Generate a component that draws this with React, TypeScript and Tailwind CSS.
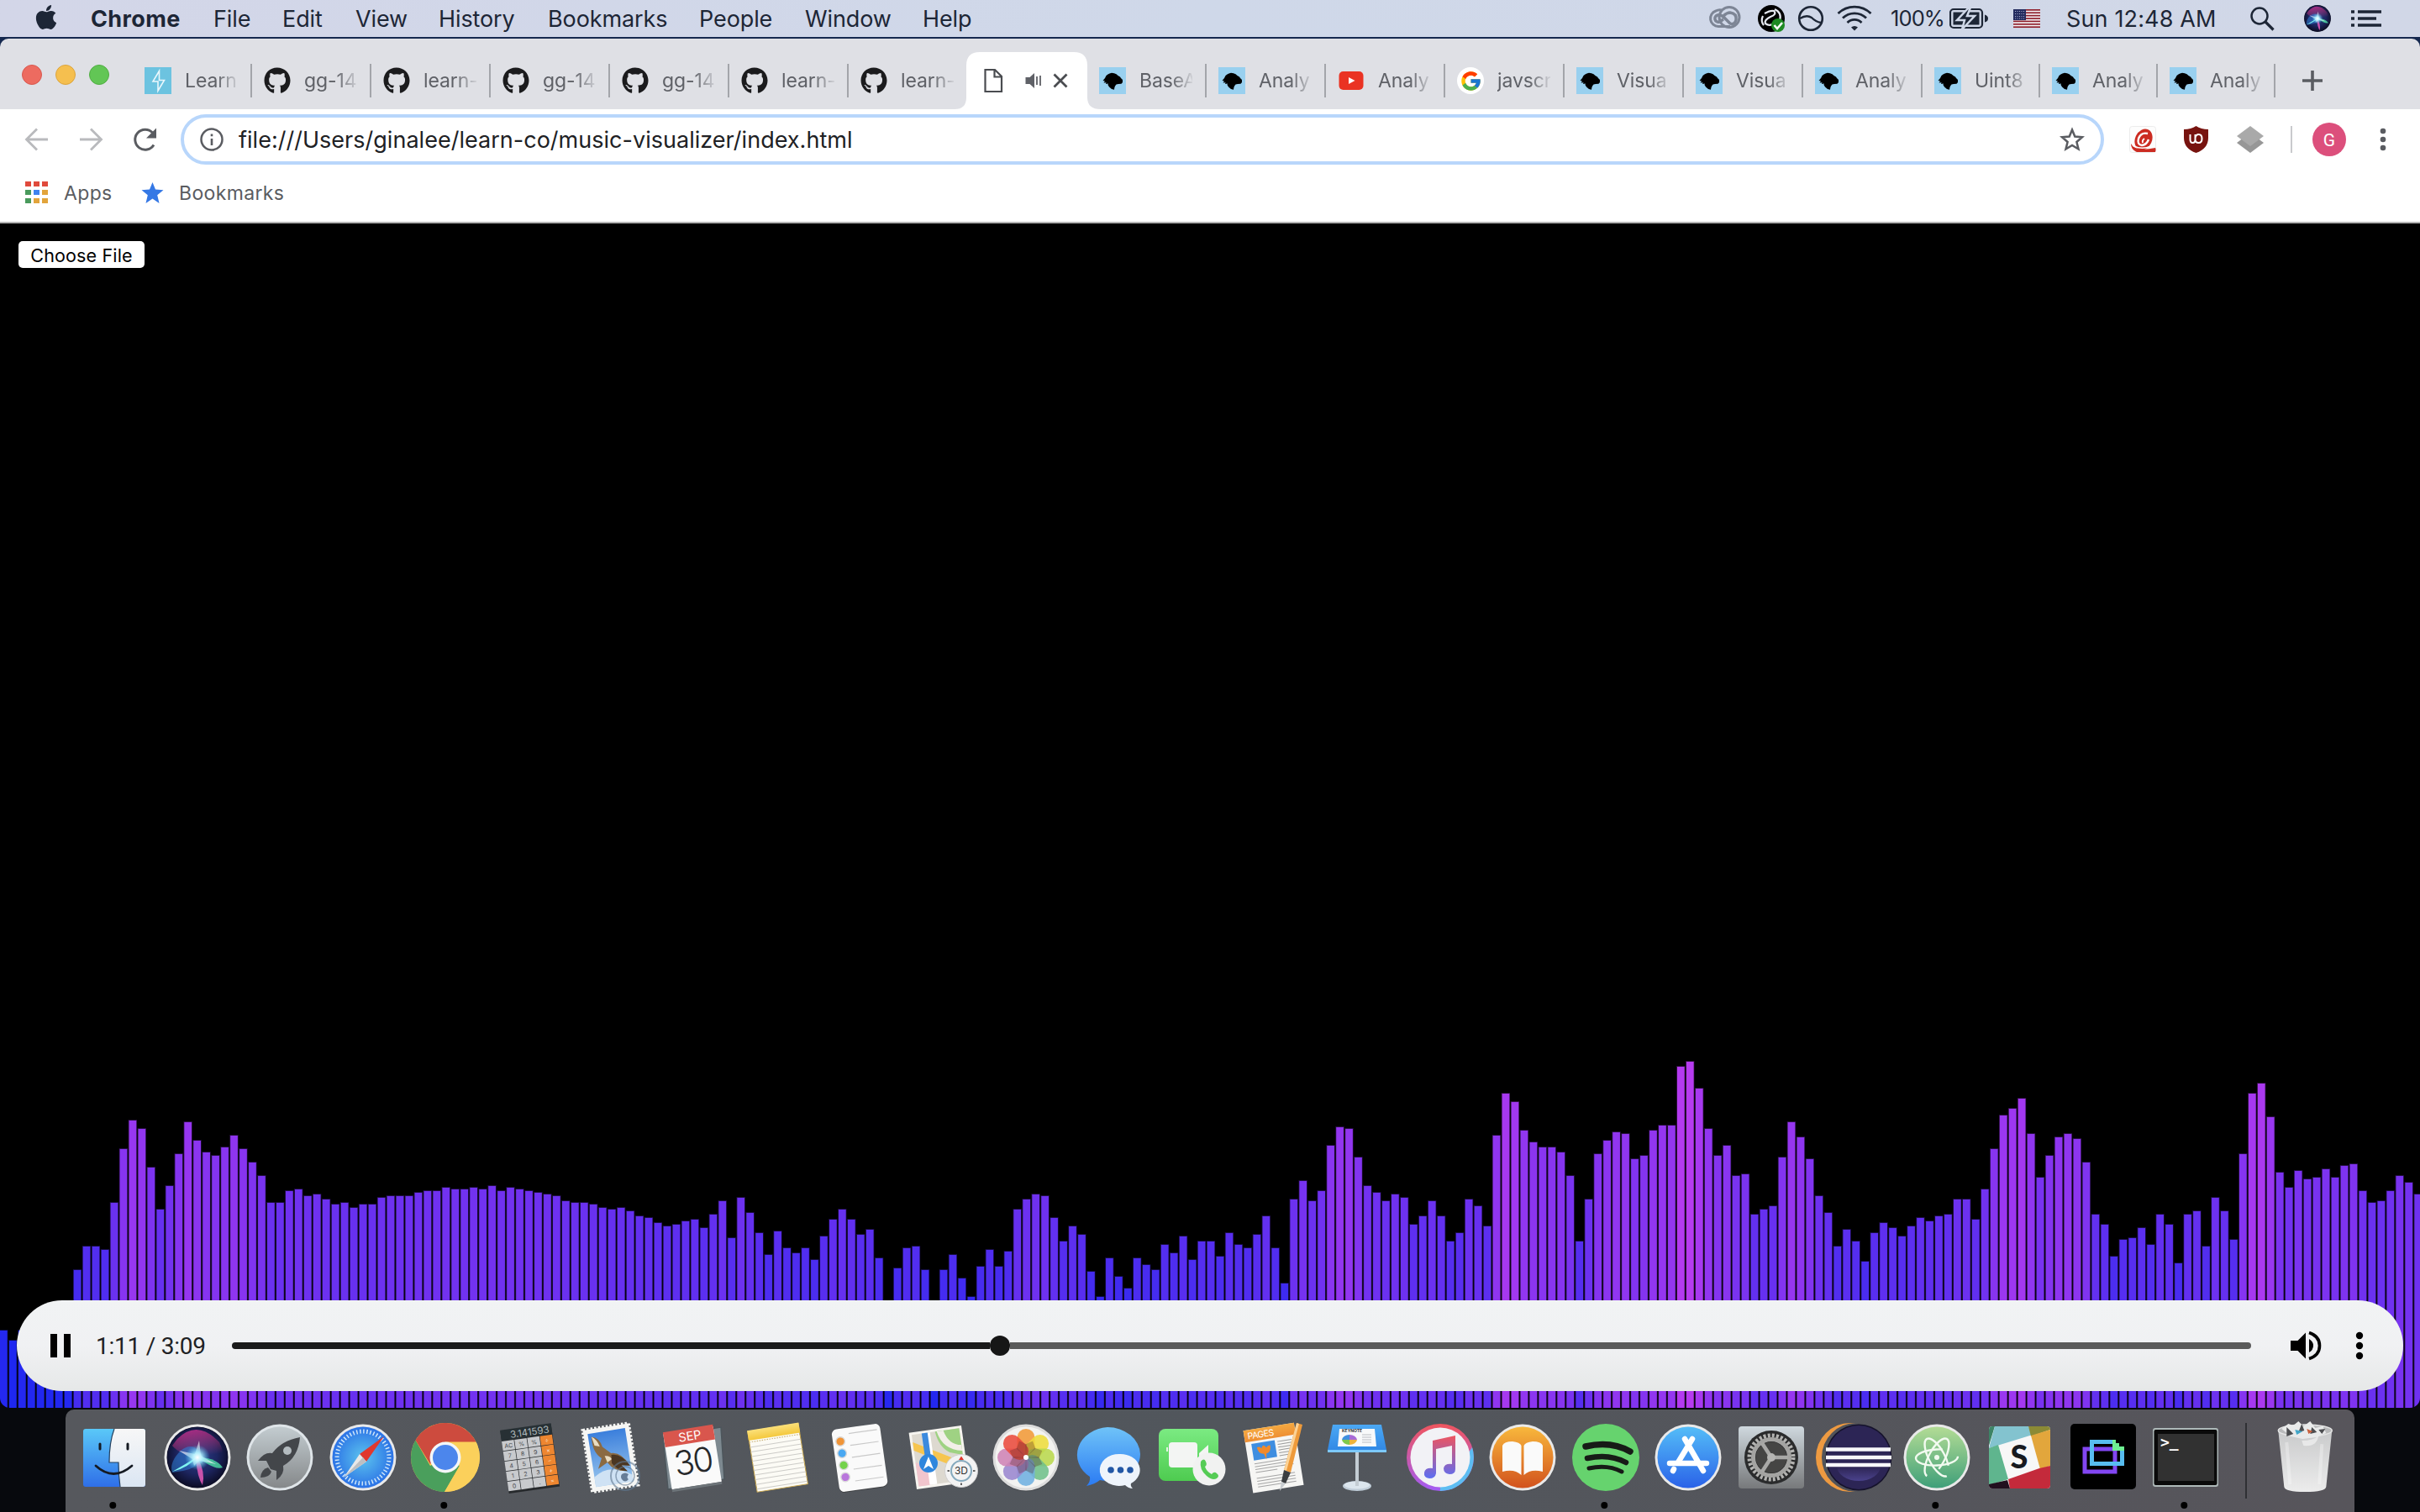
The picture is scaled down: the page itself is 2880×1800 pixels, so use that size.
import type { ReactNode } from "react";
import { FaApple, FaGithub } from "react-icons/fa";
import { FcGoogle } from "react-icons/fc";

/* ---------- Menu bar ---------- */

const menus = [
  { label: "File", cls: "w-[82px]" },
  { label: "Edit", cls: "w-[87px]" },
  { label: "View", cls: "w-[99px]" },
  { label: "History", cls: "w-[130px]" },
  { label: "Bookmarks", cls: "w-[180px]" },
  { label: "People", cls: "w-[126px]" },
  { label: "Window", cls: "w-[140px]" },
  { label: "Help", cls: "w-[80px]" },
];

function SiriOrb() {
  return (
    <>
      <defs>
        <radialGradient id="orb" cx="0.5" cy="0.45" r="0.55">
          <stop offset="0" stopColor="#2b3f8c" />
          <stop offset="0.6" stopColor="#1d2560" />
          <stop offset="1" stopColor="#0c0d26" />
        </radialGradient>
        <linearGradient id="orbPink" x1="0" y1="0" x2="0.3" y2="1">
          <stop offset="0" stopColor="#b02c8d" />
          <stop offset="1" stopColor="#e0407a" stopOpacity="0" />
        </linearGradient>
        <radialGradient id="orbGlow">
          <stop offset="0" stopColor="#ffffff" />
          <stop offset="0.35" stopColor="#b8f5ff" stopOpacity="0.9" />
          <stop offset="1" stopColor="#48c4ee" stopOpacity="0" />
        </radialGradient>
      </defs>
      <circle r="36" fill="url(#orb)" />
      <path d="M-24-22Q0-46 26-18Q34-2 26 2Q12-8 0 0Q-22-4-30-14Z" fill="url(#orbPink)" />
      <path d="M-20-8Q-2-22 8 4Q-6 16-30 18Q-34 6-20-8Z" fill="#2f7fd8" opacity=".55" />
      <path d="M0 0Q22 0 30 12Q22 16 0 0Z" fill="#4fe0a8" opacity=".8" />
      <path d="M0 0Q10 18 6 33Q0 24-2 2Z" fill="#e85ab8" opacity=".85" />
      <path d="M-30 17Q-14 8 0-1Q-10 12-30 17Z" fill="#7ef4f0" />
      <path d="M2-20L4-2L22 8L2 4L-4 10L-6 2L-22-8L-3-4Z" fill="#fff" opacity=".6" />
      <circle r="15" fill="url(#orbGlow)" />
    </>
  );
}

function MenuBar() {
  return (
    <div className="flex h-[44px] items-center bg-linear-to-r from-[#d3d6e8] via-[#cfd8e9] to-[#d1d7e7] text-[27px] leading-[44px] text-[#1d2636]">
      <div className="flex w-[108px] shrink-0 pl-[40px]">
        <FaApple className="-mt-1 h-[33px] w-[30px]" />
      </div>
      <div className="w-[146px] pt-px font-bold tracking-[0.4px]">Chrome</div>
      {menus.map((m) => (
        <div key={m.label} className={`${m.cls} shrink-0 pt-px tracking-[-0.1px]`}>
          {m.label}
        </div>
      ))}
      <div className="ml-auto flex items-center">
        <svg className="h-[44px] w-[218px]" viewBox="2020 0 218 44" fill="none">
          <g stroke="#7d8595" strokeWidth="3">
            <circle cx="2058" cy="20.500" r="12" />
            <path d="M2049 12a9 9 0 0 0-7 1a9.500 9.500 0 0 0 3 18.500h14" />
            <path d="M2051 23l-5 3a4 4 0 0 1-2-8q4-1 8 3l7 7q5 2 7-4q1-8-7-9q-4 0-8 4" strokeWidth="3.500" />
          </g>
          <circle cx="2108" cy="22" r="16" fill="#000" />
          <path d="M2112 11q9 4 6 14M2100 16q7-4 11-3q4 4-4 7q-8 4-6 8q4 3 8 1M2098 19q-3 6 1 11" stroke="#e6e9f1" strokeWidth="2.200" />
          <circle cx="2116" cy="30" r="8" fill="#1e8a23" />
          <path d="M2111.500 30l3.500 4l6-7" stroke="#fff" strokeWidth="2.600" />
          <circle cx="2155" cy="22" r="13.800" stroke="#1d2636" strokeWidth="2.600" />
          <path d="M2142 22q8-5 14-1q5 5 11 6" stroke="#1d2636" strokeWidth="2.400" />
          <g stroke="#1d2636" strokeWidth="2.800">
            <path d="M2187.500 16a28 28 0 0 1 39 0" />
            <path d="M2193 21.500a20 20 0 0 1 28 0" />
            <path d="M2198.500 27a12 12 0 0 1 17 0" />
          </g>
          <path d="M2203 32.500a6 6 0 0 1 8 0l-4 4z" fill="#1d2636" />
        </svg>
        <div className="w-[82px] pl-[12px] text-[25.500px] tracking-[-0.9px]">100%</div>
        <svg className="h-[44px] w-[139px]" viewBox="2320 0 139 44" fill="none">
          <rect x="2321" y="11" width="38" height="22" rx="4" stroke="#1d2636" strokeWidth="2.200" />
          <rect x="2324.500" y="14.500" width="31" height="15" fill="#1d2636" />
          <path d="M2362 17.500q4 1 4 4.500t-4 4.500z" fill="#1d2636" />
          <path d="M2343 9l-14 15h9l-3 11l15-16h-9l4-10z" fill="#1d2636" stroke="#d0d8e8" strokeWidth="2.500" />
          <rect x="2396" y="11" width="32" height="22" fill="#f3f3f6" />
          {[0, 1, 2, 3, 4, 5, 6].map((i) => (
            <rect key={i} x="2396" y={11 + i * 3.39} width="32" height="1.700" fill="#8f1f2b" />
          ))}
          <rect x="2396" y="11" width="15" height="13" fill="#232b5e" />
          <path d="M2398 13.500h12M2398 16.500h12M2398 19.500h12M2398 22h12" stroke="#aab0cf" strokeWidth="1" strokeDasharray="1 1.500" />
        </svg>
        <div className="w-[219px] pt-px tracking-[0.15px]">Sun 12:48 AM</div>
        <svg className="h-[44px] w-[202px]" viewBox="2678 0 202 44" fill="none">
          <circle cx="2689" cy="19" r="9.500" stroke="#1d2636" strokeWidth="2.500" />
          <path d="M2696 26l9.500 9.500" stroke="#1d2636" strokeWidth="3.200" />
          <g transform="translate(2758 22) scale(.43)">
            <circle r="37" fill="#0d1024" />
            <SiriOrb />
          </g>
          <path d="M2806 14h28M2806 22h22M2806 30h28M2798 14h4M2798 22h4M2798 30h4" stroke="#1d2636" strokeWidth="3.400" />
        </svg>
      </div>
    </div>
  );
}

/* ---------- Tab strip ---------- */

function LearnIcon() {
  return (
    <svg className="h-8 w-8 shrink-0" viewBox="0 0 32 32" fill="none">
      <rect width="32" height="32" fill="#6cc3e0" />
      <path d="M17.500 4.500L10 17h6v11l7.500-12.500h-6z" stroke="#e9f7fc" strokeWidth="1.600" />
    </svg>
  );
}

function MdnIcon() {
  return (
    <svg className="h-8 w-8 shrink-0" viewBox="0 0 32 32">
      <rect width="32" height="32" fill="#99d0ef" />
      <path d="M4.500 16L7 13L8.500 10L10.500 8.500L12.500 7.500L15 6.800L18 7.200L20.500 8.200L22.500 10L25 11.500L26 13L28 15L28 18L26.500 19.800L23 20L20.500 20.500L19 22.500L18.300 24.500L18 26.800L15 26L12 23.500L10.500 21L10.800 19.500L8 20L8.500 18.200L5.500 18.600L7 16.500Z" />
    </svg>
  );
}

function YoutubeIcon() {
  return (
    <svg className="h-8 w-8 shrink-0" viewBox="0 0 32 32">
      <rect x="1.500" y="5" width="29" height="22" rx="5" fill="#ea3323" />
      <path d="M13 12l7.500 4l-7.500 4z" fill="#fff" />
    </svg>
  );
}

function Tab({ icon, title, divider = true, narrow = false }: { icon: ReactNode; title: string; divider?: boolean; narrow?: boolean }) {
  return (
    <div className={`flex h-[68px] shrink-0 items-center pl-[14px] ${narrow ? "w-[140px]" : "w-[142px]"}`}>
      {icon}
      <div className="ml-4 w-[63px] overflow-hidden text-[23px] leading-[30px] tracking-[-0.1px] whitespace-nowrap text-[#5f6167] [mask-image:linear-gradient(to_right,black_60%,transparent_105%)]">{title}</div>
      {divider && <div className={`h-10 w-[2px] bg-[#a3a5aa] ${narrow ? "ml-[13px]" : "ml-[15px]"}`} />}
    </div>
  );
}

const gh = <FaGithub className="h-8 w-8 shrink-0 text-[#1b1b1d]" />;
const mdn = <MdnIcon />;

function TabStrip() {
  return (
    <div className="flex h-[84px] items-end rounded-t-[10px] bg-[#dfe0e5]">
      <div className="flex h-[84px] w-[158px] shrink-0 items-start gap-4 pt-[31px] pl-[26px]">
        <div className="h-6 w-6 rounded-full border border-[#d8574e] bg-[#ed6b60]" />
        <div className="h-6 w-6 rounded-full border border-[#dca43c] bg-[#f5bf4f]" />
        <div className="h-6 w-6 rounded-full border border-[#50ad42] bg-[#62c655]" />
      </div>
      <Tab icon={<LearnIcon />} title="Learn" />
      <Tab icon={gh} title="gg-14" />
      <Tab icon={gh} title="learn-" />
      <Tab icon={gh} title="gg-14" />
      <Tab icon={gh} title="gg-14" />
      <Tab icon={gh} title="learn-" />
      <Tab icon={gh} title="learn-" divider={false} />
      <svg className="-ml-4 h-[68px] w-[176px] shrink-0" viewBox="1136 62 176 68" fill="none">
        <path d="M1136 130q14 0 14-14V78q0-16 16-16h112q16 0 16 16v38q0 14 16 14z" fill="#fff" />
        <path d="M1172.500 83h11.500l8 8v18h-19.500zM1183.500 83v8.500h8" stroke="#4a4c50" strokeWidth="2.200" />
        <path d="M1220.500 92h5l5.500-5v18l-5.500-5h-5z" fill="#5f6167" />
        <path d="M1234 91v10M1238 90v12" stroke="#5f6167" strokeWidth="1.800" />
        <path d="M1254.500 88.500l15 15M1269.500 88.500l-15 15" stroke="#4a4c50" strokeWidth="2.800" />
      </svg>
      <div className="-ml-[18px] flex">
        <Tab icon={mdn} title="BaseA" />
        <Tab icon={mdn} title="Analy" />
        <Tab icon={<YoutubeIcon />} title="Analy" />
        <Tab
          icon={
            <div className="flex h-8 w-8 shrink-0 items-center justify-center rounded-full bg-white">
              <FcGoogle className="h-[27px] w-[27px]" />
            </div>
          }
          title="javscr"
        />
        <Tab icon={mdn} title="Visua" />
        <Tab icon={mdn} title="Visua" />
        <Tab icon={mdn} title="Analy" />
        <Tab icon={mdn} title="Uint8" narrow />
        <Tab icon={mdn} title="Analy" narrow />
        <Tab icon={mdn} title="Analy" narrow />
      </div>
      <svg className="ml-[30px] h-[68px] w-7" viewBox="-14 -34 28 68">
        <path d="M-12 0h24M0-12v24" stroke="#5a5c61" strokeWidth="3.600" />
      </svg>
    </div>
  );
}

/* ---------- Toolbar and bookmarks ---------- */

function Toolbar() {
  return (
    <div className="flex h-[72px] items-center bg-white">
      <svg className="h-[72px] w-[215px] shrink-0" viewBox="0 130 215 72" fill="none">
        <g stroke="#b9babd" strokeWidth="2.800">
          <path d="M57 166H32M44 153.500L31.500 166L44 178.500" />
          <path d="M95 166h25M108 153.500L120.500 166L108 178.500" />
        </g>
        <path d="M183 172.500a12 12 0 1 1-1.500-14.500" stroke="#5a5c61" strokeWidth="3" />
        <path d="M186 152.500v12h-12z" fill="#5a5c61" />
      </svg>
      <div className="flex h-[60px] w-[2289px] shrink-0 items-center rounded-full border-4 border-[#b8d6fb] pl-[18px]">
        <svg className="h-[30px] w-[30px]" viewBox="-15 -15 30 30" fill="none">
          <circle r="12.500" stroke="#5a5c61" strokeWidth="2.500" />
          <path d="M0-1v8M0-6.500v2.800" stroke="#5a5c61" strokeWidth="2.600" />
        </svg>
        <div className="ml-[17px] pt-px text-[27px] leading-[36px] tracking-[0.020px] text-[#202124]">file:///Users/ginalee/learn-co/music-visualizer/index.html</div>
        <svg className="mr-[19px] ml-auto h-[30px] w-[30px]" viewBox="-15 -15 30 30" fill="none">
          <path d="M0-11.500L3.300-3.500L12-2.800L5.400 3L7.500 11.500L0 7L-7.500 11.500L-5.400 3L-12-2.800L-3.300-3.500Z" stroke="#5a5c61" strokeWidth="2.500" />
        </svg>
      </div>
      <svg className="h-[72px] w-[376px] shrink-0" viewBox="2504 130 376 72" fill="none">
        <rect x="2534.500" y="150.500" width="31" height="31" rx="3" fill="#fdfdfd" stroke="#ececec" />
        <ellipse cx="2551" cy="166" rx="10" ry="13" fill="#cc2c22" transform="rotate(25 2551 166)" />
        <path d="M2556 159q-8-2-11 6q-2 7 4 8q6-1 8-7" stroke="#fff" strokeWidth="2.400" />
        <path d="M2552 165q-3 2-2 5" stroke="#fff" strokeWidth="1.800" />
        <path d="M2536 171q5 10 29 5q1 2 0 5h-22q-7-3-7-10z" fill="#cc2c22" />
        <path d="M2538 173q10 6 22 1" stroke="#fff" strokeWidth="1.500" />
        <path d="M2613.500 150q6 4 14.500 4v10q0 13-14.500 18q-14.500-5-14.500-18v-10q8.500 0 14.500-4z" fill="#77130f" />
        <path d="M2606.500 160v6q0 4 3 4t3-4v-6v6q0 4 4 4q4 0 4-5t-4-5q-3 0-4 4" stroke="#fff" strokeWidth="2" />
        <path d="M2678 158l16 12l-16 12l-16-12z" fill="#979797" />
        <path d="M2678 150l16 12l-16 12l-16-12z" fill="#a9a9a9" />
        <rect x="2726" y="150" width="2" height="32" fill="#c9cacd" />
        <circle cx="2772" cy="166" r="20" fill="#dc4f7c" />
        <text x="2772" y="174" textAnchor="middle" fontSize="21" fill="#fff" fontFamily="Roboto">G</text>
        <circle cx="2836" cy="156" r="3.300" fill="#5a5c61" />
        <circle cx="2836" cy="166" r="3.300" fill="#5a5c61" />
        <circle cx="2836" cy="176" r="3.300" fill="#5a5c61" />
      </svg>
    </div>
  );
}

function BookmarksBar() {
  return (
    <div className="flex h-[64px] items-start border-b-2 border-[#b4b4b4] bg-white pt-[12px] text-[23px] leading-[32px] tracking-[0.35px] text-[#5a5c61]">
      <svg className="mt-[2px] ml-[30px] h-[26px] w-[28px]" viewBox="0 0 28 26">
        <path d="M0 0h7v6h-7zM10 0h7v6h-7zM20 0h7v6h-7z" fill="#e04a3c" />
        <path d="M0 10h7v6h-7zM0 20h7v6h-7z" fill="#4a9a5c" />
        <path d="M10 10h7v6h-7z" fill="#3f83ee" />
        <path d="M20 10h7v6h-7zM10 20h7v6h-7zM20 20h7v6h-7z" fill="#e2a43b" />
      </svg>
      <div className="ml-[18px] w-[92px]">Apps</div>
      <svg className="mt-[2px] h-[27px] w-[27px]" viewBox="-13.500 -14 27 27">
        <path d="M0-13L3.500-4.500L13-3.800L5.700 2.200L8 12L0 6.500L-8 12L-5.700 2.200L-13-3.800L-3.500-4.500Z" fill="#3578e5" />
      </svg>
      <div className="ml-[18px]">Bookmarks</div>
    </div>
  );
}

/* ---------- Visualizer ---------- */

const BASE = 376;
const PITCH = 10.967;

/* Bar tops in thirds of a pixel, measured from a line 376px above the floor. */
const tops = [
  852, 888, 852, 864, 870, 876, 870, 850, 636, 552, 552, 564, 396, 204, 102, 132, 270, 420, 336, 222, 108, 174, 216, 228, 198, 156, 204, 252, 300, 396,
  396, 354, 348, 372, 366, 384, 402, 396, 414, 402, 402, 378, 372, 372, 372, 360, 354, 354, 342, 348, 348, 342, 348, 336, 354, 342, 348, 354, 360, 366,
  372, 390, 396, 396, 402, 414, 420, 414, 426, 444, 450, 468, 480, 474, 462, 456, 486, 438, 390, 522, 378, 432, 504, 582, 498, 558, 576, 558, 600, 516,
  456, 420, 456, 510, 492, 594, 830, 630, 558, 552, 636, 860, 636, 582, 666, 732, 624, 564, 624, 570, 420, 384, 366, 372, 450, 534, 480, 510, 642, 732,
  594, 660, 702, 594, 618, 636, 546, 576, 516, 600, 534, 534, 588, 504, 546, 558, 510, 444, 558, 684, 384, 318, 390, 354, 192, 126, 132, 234, 336, 360,
  390, 366, 378, 474, 444, 390, 444, 534, 504, 384, 408, 480, 156, 6, 36, 138, 180, 198, 198, 216, 300, 534, 384, 222, 174, 144, 150, 240, 228, 138,
  120, 120, -90, -108, -12, 132, 228, 192, 300, 294, 438, 420, 408, 234, 108, 162, 240, 372, 432, 552, 492, 534, 606, 504, 468, 486, 516, 480, 450, 462,
  444, 438, 384, 384, 456, 348, 204, 84, 60, 24, 150, 306, 228, 162, 150, 168, 252, 438, 474, 588, 528, 522, 486, 546, 438, 474, 612, 438, 426, 552,
  378, 426, 528, 222, 6, -30, 90, 288, 342, 282, 312, 306, 276, 306, 264, 258, 354, 396, 390, 354, 300, 324, 366,
];

function Bars() {
  return (
    <svg className="absolute bottom-0 left-0 h-[440px] w-[2880px]" viewBox="0 0 2880 440">
      {tops.map((t, i) => {
        const h = BASE - t / 3;
        const r = Math.max(28, Math.round(36 + (h - 92) * 0.46));
        const g = Math.round(34 + h * 0.06);
        const fill = `rgb(${r},${g},240)`;
        const x = i * PITCH;
        return (
          <g key={i} fill={fill}>
            <rect x={x - 0.8} y={439 - h} width="10.200" height={h + 1} opacity="0.3" />
            <rect x={x} y={440 - h} width="8.700" height={h} />
          </g>
        );
      })}
    </svg>
  );
}

function Player() {
  return (
    <div className="absolute bottom-[20px] left-[20px] flex h-[108px] w-[2840px] items-center rounded-full bg-linear-to-b from-[#f1f3f4] via-[#f0f1f3] to-[#e6e8e8]">
      <div className="ml-[40px] flex gap-2">
        <div className="h-7 w-2 bg-black" />
        <div className="h-7 w-2 bg-black" />
      </div>
      <div className="ml-[30px] w-[162px] pt-px font-[Roboto] text-[28px] leading-[32px] tracking-[-0.25px] whitespace-nowrap text-[#202124]">1:11 / 3:09</div>
      <div className="flex h-6 w-[2403px] items-center">
        <div className="h-2 w-[902px] rounded-l-full bg-[#1a1a1a]" />
        <div className="z-10 h-6 w-6 rounded-full bg-[#161616]" />
        <div className="h-2 flex-1 rounded-r-full bg-[#5a5a5a]" />
      </div>
      <svg className="ml-[43px] h-[48px] w-[100px]" viewBox="2722 1578 100 48" fill="none">
        <path d="M2726 1596h8.500l9.500-9.500v31l-9.500-9.500h-8.500z" fill="#000" />
        <path d="M2748 1594q5 3 5 8t-5 8z" fill="#000" />
        <path d="M2748 1586.500q12.500 4 12.500 15.500t-12.500 15.500" stroke="#000" strokeWidth="3.600" />
        <circle cx="2808" cy="1590" r="4.200" fill="#000" />
        <circle cx="2808" cy="1602" r="4.200" fill="#000" />
        <circle cx="2808" cy="1614" r="4.200" fill="#000" />
      </svg>
    </div>
  );
}

/* ---------- Dock ---------- */

function Slot({ children, running = false }: { children: ReactNode; running?: boolean }) {
  return (
    <svg className="h-[122px] w-[98.600px] shrink-0" viewBox="-49.300 -57 98.600 122" fill="none">
      <g transform="translate(0.700 0)">{children}</g>
      {running && <circle cx="-1" cy="57" r="4" fill="#000" />}
    </svg>
  );
}

function Disc({ fill, rim = "#e9e9e9" }: { fill: string; rim?: string }) {
  return (
    <>
      <circle cy="1" r="39.500" fill="#3c3e42" opacity=".5" />
      <circle r="39.500" fill={rim} />
      <circle r="36.500" fill={fill} />
    </>
  );
}

function Gradients() {
  const lin: [string, string, string][] = [
    ["gFinder", "#5ac8f8", "#2f6fe8"],
    ["gFace", "#f7f7f7", "#dbe6f3"],
    ["gLaunch", "#c3ccd0", "#85888a"],
    ["gNotes", "#fbe07a", "#f4c83c"],
    ["gMsg", "#6fc3f8", "#2b7bf3"],
    ["gFt", "#7bea82", "#4ecb50"],
    ["gTunes", "#f0555d", "#a35cf5"],
    ["gNote", "#ee5560", "#5c6df2"],
    ["gBooks", "#f8b83c", "#d2521d"],
    ["gStore", "#54bdf8", "#2a62e8"],
    ["gPrefs", "#cfd8de", "#77797b"],
    ["gAtom", "#b3dc95", "#3f9f79"],
    ["gKey", "#4ba8f4", "#2f86e4"],
    ["gTrash", "#c9cacb", "#ececec"],
    ["gPages", "#f5a940", "#ee8f33"],
    ["gSky", "#3b7fdc", "#9cc8ee"],
    ["gEcl", "#2b2350", "#4a428c"],
  ];
  return (
    <svg className="absolute h-0 w-0">
      <defs>
        {lin.map(([id, a, b]) => (
          <linearGradient key={id} id={id} x1="0" y1="0" x2="0" y2="1">
            <stop offset="0" stopColor={a} />
            <stop offset="1" stopColor={b} />
          </linearGradient>
        ))}
        <radialGradient id="gSafari">
          <stop offset="0" stopColor="#5cc4ee" />
          <stop offset="1" stopColor="#2c73e6" />
        </radialGradient>
      </defs>
    </svg>
  );
}

const petals = ["#f19a38", "#eedd3c", "#b9d84d", "#6fc08a", "#6fb0e0", "#9a86cf", "#cf83b5", "#ea4b3c"];
const calcRows = [["AC", "%", "%", "÷"], ["7", "8", "9", "×"], ["4", "5", "6", "−"], ["1", "2", "3", "+"], ["0", "", ".", "="]];

function Dock() {
  return (
    <div className="flex h-[122px] w-[2724px] rounded-t-[10px] bg-linear-to-r from-[#56585d] via-[#51565c] to-[#57555b] pl-[8px]">
      <Gradients />
      <Slot running>
        <rect x="-37" y="-34" width="74" height="69" rx="3" fill="url(#gFinder)" />
        <path d="M0-34h34q3 0 3 3v63q0 3-3 3h-27q-2-14-2-29h-11q0-24 6-40z" fill="url(#gFace)" />
        <path d="M0-34q-6 16-6 40h11q0 15 2 29" stroke="#24405e" strokeWidth="1.200" />
        <path d="M-17-16v6M16-16v6" stroke="#151a22" strokeWidth="3" strokeLinecap="round" />
        <path d="M-22 10q21 19 43 0" stroke="#151a22" strokeWidth="2.800" strokeLinecap="round" />
      </Slot>
      <Slot>
        <Disc fill="#0c0d26" />
        <SiriOrb />
      </Slot>
      <Slot>
        <Disc fill="url(#gLaunch)" rim="#dfe5e9" />
        <path d="M24-24Q2-20-9-5Q-18-7-26 4L-16 4L-11 14L-4 16L-4 27Q6 20 4 10Q22 0 24-24Z" fill="#43464a" />
        <circle cx="9" cy="-8" r="5" fill="#b4bcc0" />
        <path d="M-14 12Q-22 14-23 24Q-12 24-10 17Z" fill="#43464a" />
      </Slot>
      <Slot>
        <Disc fill="url(#gSafari)" />
        <circle r="31" stroke="#d7ebfb" strokeWidth="5" strokeDasharray="1.400 2.657" />
        <path d="M25-25L4 5L-4-4Z" fill="#e1382e" />
        <path d="M-23 24L4 5L-4-4Z" fill="#e8e8e8" />
        <path d="M-23 24L4 5L0 0Z" fill="#bdbfc2" />
      </Slot>
      <Slot running>
        <circle r="41" fill="#f7cb54" />
        <path d="M-35.500-20.500A41 41 0 0 0-1 41L17 10L0 0L-18 10Z" fill="#4a9f5c" />
        <path d="M0-18.500H36.500A41 41 0 0 1-1 41L17 10Z" fill="#fbd05b" />
        <path d="M-35.500-20.500A41 41 0 0 1 36.500-18.500H0L-18 8Z" fill="#cd4b3e" />
        <circle r="18.500" fill="#f4f6f8" />
        <circle r="15" fill="#4c86ec" />
      </Slot>
      <Slot>
        <g transform="translate(2 0) rotate(-8)">
          <rect x="-31" y="-36" width="61" height="75" fill="#26292c" />
          <rect x="-31" y="-37" width="61" height="13" fill="#273034" />
          <text x="27" y="-26" textAnchor="end" fontSize="11.500" fill="#aeb8bb" fontFamily="Inter">3.141593</text>
          {calcRows.map((row, j) =>
            row.map((k, i) => (
              <g key={`${j}-${i}`}>
                <rect x={-31 + i * 15.3} y={-23.500 + j * 12.1} width="14.600" height="11.400" fill={i === 3 ? "#ee8630" : "#c8cacd"} />
                <text x={-23.500 + i * 15.3} y={-15 + j * 12.1} textAnchor="middle" fontSize="7" fill={i === 3 ? "#fbe3cd" : "#4a4c50"} fontFamily="Inter">{k}</text>
              </g>
            )),
          )}
        </g>
      </Slot>
      <Slot>
        <g transform="rotate(-9)">
          <rect x="-29" y="-37" width="55" height="74" fill="#f6f6f4" stroke="#f6f6f4" strokeWidth="4" strokeDasharray="2.600 2" />
          <rect x="-24" y="-32" width="45" height="64" fill="url(#gSky)" />
          <path d="M-24 20q20-14 45 4v8h-45z" fill="#cfe2f4" />
          <path d="M-20-28q9 2 11 14l9 9q12 0 20 18l-10-2l6 8q-16-2-22-14l-12 6l6-12q-10-8-8-27z" fill="#8b6a42" />
          <path d="M-20-28q6 4 8 13l-6-2zM-8-3q6 0 8 5l-6 3z" fill="#e9dcc2" />
          <path d="M0-3q12 0 20 16l-10-2l6 8q-12-2-17-12z" fill="#4b3621" />
        </g>
        <circle cx="16" cy="22" r="17" stroke="#5f7891" strokeWidth="2" opacity=".6" />
        <circle cx="16" cy="22" r="11" stroke="#5f7891" strokeWidth="1.500" opacity=".6" />
        <path d="M12 20q4-3 8 0q-3 4 0 6q-4 5-8 0q-2-3 0-6z" fill="#4b647f" opacity=".8" />
      </Slot>
      <Slot>
        <path d="M-37-25L32-36L36 26L-31 38Z" fill="#7d8990" stroke="#4d565c" strokeWidth="1.500" />
        <g transform="translate(-2 0) rotate(-9)">
          <rect x="-30" y="-33" width="60" height="67" rx="1" fill="#fafafa" />
          <rect x="-30" y="-35" width="60" height="18" fill="#d9564d" />
          <path d="M-30 34h60v3h-60z" fill="#6d7479" />
          <text x="1" y="-20.500" textAnchor="middle" fontSize="14.500" fill="#fff" fontFamily="Inter">SEP</text>
          <text x="0" y="19" textAnchor="middle" fontSize="40" fontWeight="300" letterSpacing="-2" fill="#26282a" fontFamily="Inter">30</text>
        </g>
      </Slot>
      <Slot>
        <g transform="rotate(-9)">
          <rect x="-30" y="-36" width="61" height="73" fill="#fcfbf5" stroke="#c9a64a" strokeWidth="1" />
          <rect x="-30.500" y="-37" width="62" height="12" fill="url(#gNotes)" />
          <path d="M-30-23h61" stroke="#c9b27a" strokeWidth="1.200" strokeDasharray="1.500 1.500" />
          {[0, 1, 2, 3, 4, 5, 6, 7, 8, 9].map((i) => (
            <path key={i} d={`M-30 ${-17 + i * 5.6}h61`} stroke="#cdccc8" strokeWidth="1" />
          ))}
        </g>
      </Slot>
      <Slot>
        <g transform="rotate(-8)">
          <rect x="-29" y="-36" width="58" height="75" rx="6" fill="#333" opacity=".6" />
          <rect x="-29" y="-37" width="58" height="75" rx="6" fill="#fafafa" />
          {["#f09437", "#4aa8f2", "#74d24c", "#b977dc"].map((c, i) => (
            <g key={c}>
              <circle cx="-20" cy={-22 + i * 14.3} r="5.300" fill={c} stroke="#dadada" strokeWidth="1.400" />
              <path d={`M-9 ${-30 + i * 14.3}h34`} stroke="#c9c9c9" strokeWidth="1.200" />
            </g>
          ))}
          <path d="M-9 27h34" stroke="#c9c9c9" strokeWidth="1.200" />
        </g>
      </Slot>
      <Slot>
        <g transform="translate(-5 0) rotate(-8)">
          <rect x="-31" y="-34" width="63" height="68" fill="#f7f5f0" />
          <rect x="-28" y="-31" width="57" height="62" fill="#ddd9d0" />
          <path d="M0-31h29v32L14-4Q2-12 0-31z" fill="#9fd283" />
          <path d="M10-31q4 18 19 20v7Q6-8 2-31z" fill="#f2efe8" />
          <path d="M-28-12L-10-2L29 20V10L-10-12L-28-22z" fill="#f6c54f" />
          <path d="M-28 2l14 8v21h-14z" fill="#f1c5cd" />
          <path d="M-14-31h8v62h-9z" fill="#fff" />
          <path d="M-16-31h7v34h-7z" fill="#3b8ade" />
        </g>
        <circle cx="-17" cy="7" r="11" fill="#2f86dd" />
        <path d="M-17-1l6 15l-6-4l-6 4z" fill="#fff" />
        <circle cx="22" cy="16" r="19.500" fill="#f3f3f3" stroke="#cfcfcf" strokeWidth="1" />
        <circle cx="22" cy="16" r="12" stroke="#85a9bd" strokeWidth="2" />
        <text x="22" y="20.500" textAnchor="middle" fontSize="12" fill="#333" fontFamily="Inter">3D</text>
        <path d="M22-1.500l3 4.500h-6z" fill="#e0342a" />
        <path d="M5.500 16h2.500M36 16h2.500M22 30.500v2.500" stroke="#333" strokeWidth="1.500" />
      </Slot>
      <Slot>
        <Disc fill="#f3f3f1" rim="#dcdcdc" />
        {petals.map((c, i) => (
          <rect key={c} x="-10.500" y="-34" width="21" height="34" rx="10.500" fill={c} opacity=".88" transform={`rotate(${i * 45})`} />
        ))}
        {petals.map((c, i) => (
          <path key={c} d="M0 0L-6.500-14L0-21L6.500-14Z" fill="#5a2a2a" opacity=".32" transform={`rotate(${i * 45 + 22.5})`} />
        ))}
        <circle r="3" fill="#fff" />
      </Slot>
      <Slot>
        <path d="M-1-36A39 33 0 0 1 38-4A39 32 0 0 1-10 27Q-16 32-26 34Q-21 29-22 23A39 33 0 0 1-1-36Z" fill="url(#gMsg)" />
        <path d="M14-4A23 19 0 1 0 20 33Q24 37 29 37Q26 34 27 31A23 19 0 0 0 14-4Z" fill="#eef4fb" />
        <circle cx="3" cy="15" r="3.800" fill="#2257a5" />
        <circle cx="14.500" cy="15" r="3.800" fill="#2257a5" />
        <circle cx="26" cy="15" r="3.800" fill="#2257a5" />
      </Slot>
      <Slot>
        <rect x="-39" y="-34" width="71" height="62" rx="8" fill="url(#gFt)" />
        <rect x="-27" y="-18" width="34" height="30" rx="4" fill="#f3f5f3" />
        <path d="M9-5l11-10v25l-11-8z" fill="#f3f5f3" />
        <rect x="-30" y="-12" width="2" height="5" fill="#e3f3e3" />
        <circle cx="21" cy="14" r="19.500" fill="#f1f2f1" />
        <path d="M11 5q4-5 6 0q2 4-1 6q2 6 8 9q3-4 6-1q4 3 0 6q-5 3-12-3q-9-8-7-17z" fill="#55cc55" />
      </Slot>
      <Slot>
        <g transform="rotate(-9)">
          <rect x="-31" y="-37" width="61" height="75" fill="#f6f6f4" />
          <rect x="-31" y="-37" width="61" height="14" fill="url(#gPages)" />
          <text x="-27" y="-26" fontSize="10.500" letterSpacing="-0.500" fill="#fff" fontFamily="Inter">PAGES</text>
          <rect x="-24" y="-20" width="28" height="20" fill="#3f8ee0" />
          <path d="M-18-15q4-1 5 2q3-6 6 0q2-3 5-2q0 9-6 9l-1 7l-2-7q-7-1-7-9z" fill="#f08a2c" />
          {[0, 1, 2, 3, 4, 5].map((i) => (
            <path key={i} d={`M7 ${-18 + i * 3.4}h17`} stroke="#9a9a9a" strokeWidth="1" />
          ))}
          {[0, 1, 2, 3, 5, 6, 7, 8].map((i) => (
            <path key={i} d={`M-24 ${4 + i * 3.5}h${i === 3 ? 26 : 46}`} stroke="#a4a4a4" strokeWidth="1" />
          ))}
        </g>
        <path d="M27-41l7 2L20 18l-8-3z" fill="#ee9a3a" />
        <path d="M27-41l3 1L15 16l-3-1z" fill="#fbd296" />
        <path d="M12 15l8 3l-6 13l-5-2z" fill="#3a3d40" />
        <path d="M9 29l5 2l-7 9z" fill="#c8cdd0" />
      </Slot>
      <Slot>
        <ellipse cx="0" cy="34" rx="17" ry="6" fill="#c0cdd8" />
        <ellipse cx="0" cy="33" rx="15" ry="4.500" fill="#dce6ee" />
        <rect x="-2" y="-8" width="4" height="42" fill="#c3ccd3" />
        <path d="M-29-39h58l6 30v3h-70v-3z" fill="url(#gKey)" />
        <path d="M-35-9h70v3h-70z" fill="#7cc8fa" />
        <path d="M-21-34h42l2 21h-46z" fill="#f8f9fa" />
        <text x="-18" y="-30" fontSize="5" fontWeight="700" fill="#333" fontFamily="Inter">KEYNOTE</text>
        <path d="M-9-21v-6a9 6.500 0 0 0-9 6z" fill="#3f8fdf" />
        <path d="M-9-21v-6a9 6.500 0 0 1 9 6z" fill="#a76bd6" />
        <path d="M-9-21h9a9 6.500 0 0 1-9 6z" fill="#f0b33c" />
        <path d="M-9-21h-9a9 6.500 0 0 0 9 6z" fill="#7fc84a" />
        <path d="M6-27h11M6-24h11M6-21h11M6-18h11" stroke="#b9bdc2" strokeWidth="1.200" />
      </Slot>
      <Slot>
        <circle r="40" fill="url(#gTunes)" />
        <path d="M38-12A40 40 0 0 1 0 40L0 30L30 0Z" fill="#5dbdf2" />
        <circle r="35.500" fill="#f2f2f6" />
        <path d="M-9-20L18-26V14Q18 20 11 20Q4 19 4 13Q5 7 14 8V-14L-5-10V19Q-6 25-13 25Q-20 24-19 18Q-18 12-9 13Z" fill="url(#gNote)" />
      </Slot>
      <Slot>
        <Disc fill="url(#gBooks)" />
        <path d="M-1.500 21Q-10 13-24 17V-14Q-22-19-12-19Q-3-18-1.500-14Z" fill="#fafafa" />
        <path d="M1.500 21Q10 13 24 17V-14Q22-19 12-19Q3-18 1.500-14Z" fill="#fafafa" />
      </Slot>
      <Slot running>
        <circle r="40" fill="#66d36e" />
        <path d="M-24-13Q6-20 29-7" stroke="#171b17" strokeWidth="7.500" strokeLinecap="round" />
        <path d="M-22 1Q4-5 24 6" stroke="#171b17" strokeWidth="6.500" strokeLinecap="round" />
        <path d="M-20 13Q2 8 19 17" stroke="#171b17" strokeWidth="5" strokeLinecap="round" />
      </Slot>
      <Slot>
        <Disc fill="url(#gStore)" />
        <g stroke="#fff" strokeWidth="6.500" strokeLinecap="round">
          <path d="M-22 7H22" />
          <path d="M-4-22L18 16M5-22L-12 6M-17 14l-1 2" />
        </g>
      </Slot>
      <Slot>
        <rect x="-39" y="-37" width="78" height="74" rx="4" fill="url(#gPrefs)" />
        <circle r="32" fill="#2a2b2c" />
        <circle r="26" stroke="#b3b3b1" strokeWidth="5" strokeDasharray="3 2.105" />
        <circle r="21.500" stroke="#a4a4a2" strokeWidth="5" />
        <circle r="18.500" fill="#454544" />
        <path d="M0 0L-11-17M0 0H20M0 0L-11 17" stroke="#a8a8a6" strokeWidth="4.500" />
        <circle r="5" fill="#b5b5b3" />
      </Slot>
      <Slot>
        <circle cx="-4" r="41" fill="#ee9a41" />
        <circle cx="3" r="41" fill="#515359" />
        <circle cx="6" r="39.500" fill="#15122b" />
        <circle cx="6" r="38" fill="#2c2555" />
        <path d="M-20 10h52a26 18 0 0 1-52 0z" fill="url(#gEcl)" />
        <path d="M-33-9.500H44M-33 0H45M-33 9H44" stroke="#f7f7fa" strokeWidth="4.600" />
      </Slot>
      <Slot running>
        <Disc fill="url(#gAtom)" />
        <g stroke="#f2faf0" strokeWidth="2.400">
          <ellipse rx="25" ry="9.500" transform="rotate(-3)" strokeDasharray="92 24" />
          <ellipse rx="25" ry="9.500" transform="rotate(62)" strokeDasharray="100 16" />
          <ellipse rx="25" ry="9.500" transform="rotate(118)" strokeDasharray="96 20" />
        </g>
        <circle r="3" fill="#f2faf0" />
      </Slot>
      <Slot>
        <g transform="translate(-1 0)">
          <rect x="-36" y="-37" width="73" height="74" rx="4" fill="#f7f7f7" />
          <path d="M-36-33q0-4 4-4h3L-36-14z" fill="#3d8466" />
          <path d="M-29-37H11L16-27L-36-11Z" fill="#83c3cf" />
          <path d="M11-37h22q4 0 4 4L14-25z" fill="#8b8a35" />
          <path d="M14-26L37-33V10L25 14Z" fill="#e2a63c" />
          <path d="M-36-11L-25-15L-13 26L-36 33Z" fill="#5fb58e" />
          <path d="M-13 26L24 13L37 10V33q0 4-4 4H-11Z" fill="#c42a3b" />
          <path d="M-36 32L-14 27L-11 37H-32q-4 0-4-4z" fill="#22101f" />
          <text x="0" y="13" textAnchor="middle" fontSize="38" fontWeight="900" fill="#171a1f" fontFamily="Lato">S</text>
        </g>
      </Slot>
      <Slot>
        <g transform="translate(1 0)">
          <rect x="-39" y="-40" width="78" height="78" rx="5" fill="#000" />
          <rect x="-22" y="-10" width="36" height="27" stroke="#8246f2" strokeWidth="5" />
          <rect x="-13.500" y="-18.500" width="36" height="26" stroke="#58bdf0" strokeWidth="5" />
          <path d="M11-21h4v4h4v4h6v5h-14z" fill="#6ff093" />
          <path d="M15-21h11v8h-7v-4h-4z" fill="#000" />
        </g>
      </Slot>
      <Slot running>
        <rect x="-39" y="-35" width="78" height="70" rx="3" fill="#aeb9b9" />
        <rect x="-37.500" y="-33" width="75" height="66" rx="2" fill="#0a0a0a" />
        <rect x="-33" y="-28" width="67" height="56" fill="#313131" />
        <text x="-30" y="-12" fontSize="18" fontWeight="700" fill="#fff" fontFamily="DejaVu Sans Mono">&gt;_</text>
      </Slot>
      <div className="mt-[16px] ml-[23px] h-[90px] w-[2px] bg-[#2f3034]" />
      <svg className="ml-[20px] h-[122px] w-[98.600px]" viewBox="-49.300 -57 98.600 122" fill="none">
        <path d="M-32-32L32-32L25 35Q24 41 0 41Q-24 41-25 35Z" fill="url(#gTrash)" />
        <ellipse cx="0" cy="-32" rx="32" ry="7" fill="#b9babb" stroke="#e4e4e4" strokeWidth="1.500" />
        <path d="M-28-34l8-6l6 2l6-5l6 6l8-6l6 8l9-2l4 8l-12 5l-16 2l-14-3z" fill="#e9eaea" />
        <path d="M-22-36l8 8l-8 3zM-4-40l3 8l-7 2zM8-36l6 6l-8 2zM16-33l8-1l-4 6z" fill="#4c4d50" />
        <path d="M-12-33l9 2l-7 4z" fill="#42a7c9" />
        <path d="M2-34l7 3l-5 3z" fill="#c9603d" />
        <path d="M-4-20q14 0 20-6q-2 14-18 12z" fill="#fff" opacity=".5" />
        <path d="M-22-18l4 50M20-16l-3 48" stroke="#fff" strokeWidth="4" opacity=".3" />
      </svg>
    </div>
  );
}

export default function App() {
  return (
    <div className="flex h-[1800px] w-[2880px] flex-col overflow-hidden bg-[#07090d] font-[Inter,sans-serif]">
      <MenuBar />
      <div className="flex h-[1632px] flex-col bg-linear-to-b from-[#15284f] from-2% to-[#07090d] to-10% pt-[2px]">
        <TabStrip />
        <Toolbar />
        <BookmarksBar />
        <div className="relative flex-1 overflow-hidden rounded-b-[12px] bg-black pt-[21px] pl-[22px]">
          <button className="block h-8 w-[150px] rounded-[5px] bg-white pt-px text-[21.500px] leading-[32px] tracking-[0.15px] text-black">Choose File</button>
          <Bars />
          <Player />
        </div>
      </div>
      <div className="flex flex-1 items-end pl-[78px]">
        <Dock />
      </div>
    </div>
  );
}
